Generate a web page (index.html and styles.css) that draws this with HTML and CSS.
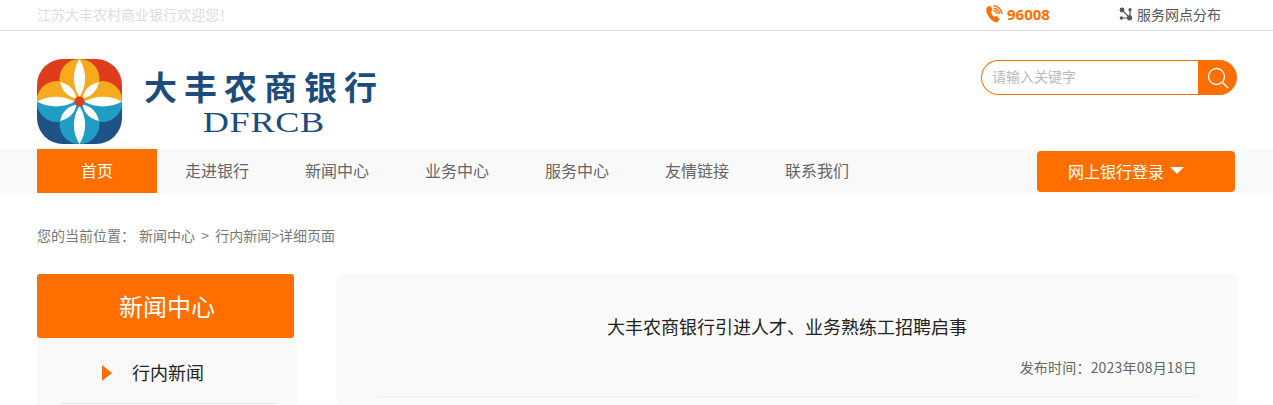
FILE: index.html
```html
<!DOCTYPE html>
<html>
<head>
    <meta charset="utf-8">
    <link rel="stylesheet" href="styles.css">
</head>
<body>
    <div class="topbar">
        <div class="wrap topbar-inner">
            <div class="welcome">江苏大丰农村商业银行欢迎您！</div>
            <div class="hotline">
                <svg class="phone-icon" width="18" height="18" viewBox="0 0 18 18">
                    <path d="M3.2 1.6 L5.6 1 L7.6 5 L5.9 6.5 C6.2 8.6 7.6 10.9 9.4 12 L11.2 10.8 L14.4 13.8 L13.4 16 C12.6 17.4 10.8 17.6 9.2 16.8 C4.8 14.4 1.6 9.4 1.2 4.8 C1.1 3.4 2 2.2 3.2 1.6 Z" fill="#ff6f00"/>
                    <path d="M8.6 5.6 A3.6 3.6 0 0 1 12 9 M8.6 3.2 A6 6 0 0 1 14.4 9 M8.6 .8 A8.4 8.4 0 0 1 16.8 9" fill="none" stroke="#ff6f00" stroke-width="1.4"/>
                </svg>
                <span class="hotline-num">96008</span>
            </div>
            <div class="outlets">
                <svg width="14" height="14" viewBox="0 0 14 14">
                    <path d="M3 3 L10 10 M3 11 L10 11 M11 3 L11 10" stroke="#555" stroke-width="1.2" fill="none"/>
                    <circle cx="3" cy="3" r="2.4" fill="#555"/>
                    <circle cx="11" cy="2.6" r="1.6" fill="#555"/>
                    <circle cx="2.4" cy="11" r="1.7" fill="#555"/>
                    <circle cx="10.6" cy="10.8" r="2.6" fill="#555"/>
                </svg>
                <span>服务网点分布</span>
            </div>
        </div>
    </div>

    <div class="wrap header">
        <div class="logo">
            <svg width="85" height="85" viewBox="0 0 85 85">
                <defs>
                    <clipPath id="logoBox"><rect width="85" height="85" rx="26"/></clipPath>
                    <clipPath id="logoTop"><rect width="85" height="42.5"/></clipPath>
                    <clipPath id="logoBottom"><rect y="42.5" width="85" height="42.5"/></clipPath>
                </defs>
                <g clip-path="url(#logoBox)">
                    <rect width="85" height="42.5" fill="#df3c1e"/>
                    <rect y="42.5" width="85" height="42.5" fill="#1f5287"/>
                    <g clip-path="url(#logoTop)" fill="#f6ab1e">
                        <circle cx="42.5" cy="20" r="20"/>
                        <circle cx="20" cy="42.5" r="20.5"/>
                        <circle cx="65" cy="42.5" r="20.5"/>
                    </g>
                    <g clip-path="url(#logoBottom)" fill="#219cc3">
                        <circle cx="42.5" cy="65" r="20"/>
                        <circle cx="20" cy="42.5" r="20.5"/>
                        <circle cx="65" cy="42.5" r="20.5"/>
                    </g>
                    <g fill="#fff">
                        <path d="M42.5 0 C50 12 50 26 42.5 38 C35 26 35 12 42.5 0 Z"/>
                        <path d="M42.5 85 C50 73 50 59 42.5 47 C35 59 35 73 42.5 85 Z"/>
                        <path d="M0 42.5 C12 36 26 36 38 42.5 C26 49 12 49 0 42.5 Z"/>
                        <path d="M85 42.5 C73 36 59 36 47 42.5 C59 49 73 49 85 42.5 Z"/>
                        <path d="M23 23 C32 25 38 31 39.5 39.5 C31 38 25 32 23 23 Z"/>
                        <path d="M62 23 C53 25 47 31 45.5 39.5 C54 38 60 32 62 23 Z"/>
                        <path d="M23 62 C32 60 38 54 39.5 45.5 C31 47 25 53 23 62 Z"/>
                        <path d="M62 62 C53 60 47 54 45.5 45.5 C54 47 60 53 62 62 Z"/>
                    </g>
                    <circle cx="42.5" cy="42.5" r="5" fill="#df3c1e"/>
                </g>
            </svg>
            <div class="logo-name">
                <div class="logo-cn">大丰农商银行</div>
                <div class="logo-en">DFRCB</div>
            </div>
        </div>
        <div class="search">
            <div class="search-input">请输入关键字</div>
            <div class="search-btn">
                <svg width="24" height="24" viewBox="0 0 24 24" fill="none" stroke="#fff">
                    <circle cx="10.5" cy="10.5" r="8" stroke-width="1.3"/>
                    <path d="M16.5 16.5 L22 22" stroke-width="1.6"/>
                </svg>
            </div>
        </div>
    </div>

    <div class="nav">
        <div class="wrap nav-inner">
            <a class="nav-item active">首页</a>
            <a class="nav-item">走进银行</a>
            <a class="nav-item">新闻中心</a>
            <a class="nav-item">业务中心</a>
            <a class="nav-item">服务中心</a>
            <a class="nav-item">友情链接</a>
            <a class="nav-item">联系我们</a>
            <div class="login-btn">网上银行登录<span class="caret"></span></div>
        </div>
    </div>

    <div class="wrap crumbs">
        <span class="crumbs-label">您的当前位置：</span>
        <span>新闻中心 &nbsp;&gt; &nbsp;行内新闻&gt;详细页面</span>
    </div>

    <div class="wrap main">
        <div class="side">
            <div class="side-title">新闻中心</div>
            <div class="side-list">
                <div class="side-item">行内新闻</div>
            </div>
        </div>
        <div class="article">
            <h1 class="article-title">大丰农商银行引进人才、业务熟练工招聘启事</h1>
            <div class="article-date">发布时间：2023年08月18日</div>
            <div class="article-rule"></div>
        </div>
    </div>
</body>
</html>
```

FILE: styles.css
```css
html, body {
    height: 405px;
    overflow: hidden;
}

body {
    margin: 0;
    background: #fff;
    font-family: "Noto Sans CJK SC", "Liberation Sans", sans-serif;
    font-size: 14px;
    color: #666;
}

.wrap {
    width: 1200px;
    margin-left: 37px;
}

.topbar {
    height: 30px;
    border-bottom: 1px solid #e5e5e5;
}

.topbar-inner {
    display: flex;
    align-items: center;
    height: 28px;
}

.welcome {
    color: #ddd;
    width: 948px;
}

.hotline {
    display: flex;
    align-items: center;
    gap: 4px;
    width: 134px;
}

.hotline-num {
    font-family: "Open Sans", sans-serif;
    font-size: 15px;
    font-weight: 700;
    color: #ff6f00;
}

.outlets {
    display: flex;
    align-items: center;
    gap: 4px;
    white-space: nowrap;
    color: #555;
}

.header {
    display: flex;
    justify-content: space-between;
    align-items: flex-start;
    height: 118px;
}

.logo {
    display: flex;
    margin-top: 28px;
}

.logo-name {
    margin-left: 22px;
    width: 240px;
    text-align: center;
    color: #1c4c7c;
}

.logo-cn {
    margin-top: 9px;
    height: 36px;
    font-size: 33px;
    line-height: 36px;
    font-weight: 700;
    letter-spacing: 7px;
    white-space: nowrap;
}

.logo-en {
    display: inline-block;
    margin-top: 3px;
    font-family: "Liberation Serif", serif;
    font-size: 29px;
    line-height: 30px;
    letter-spacing: .5px;
    transform: scaleX(1.25);
}

.search {
    display: flex;
    margin-top: 29px;
    width: 256px;
    height: 35px;
}

.search-input {
    flex: 1;
    padding-left: 10px;
    border: 1px solid #ff6f00;
    border-right: 0;
    border-radius: 18px 0 0 18px;
    line-height: 31px;
    color: #bbb;
}

.search-btn {
    display: flex;
    align-items: center;
    justify-content: center;
    width: 39px;
    background: #ff6f00;
    border-radius: 0 18px 18px 0;
}

.nav {
    height: 44px;
    background: #f9f9f9;
}

.nav-inner {
    display: flex;
    align-items: center;
    height: 44px;
}

.nav-item {
    width: 120px;
    height: 44px;
    line-height: 42px;
    text-align: center;
    font-size: 16px;
    color: #666;
}

.nav-item.active {
    background: #ff6f00;
    color: #fff;
}

.login-btn {
    display: flex;
    align-items: center;
    justify-content: center;
    gap: 6px;
    width: 178px;
    height: 39px;
    padding: 0 20px 2px 0;
    margin-left: 160px;
    margin-top: 1px;
    background: #ff6f00;
    border-radius: 4px;
    font-size: 16px;
    color: #fff;
}

.caret {
    width: 0;
    height: 0;
    border-left: 7px solid transparent;
    border-right: 7px solid transparent;
    border-top: 7px solid #fff;
    margin-bottom: 1px;
}

.crumbs {
    display: flex;
    margin-top: 32px;
    height: 20px;
    line-height: 20px;
    font-size: 14px;
    color: #777;
}

.crumbs-label {
    width: 102px;
}

.main {
    display: flex;
    height: 131px;
    margin-top: 29px;
}

.side {
    width: 260px;
    margin-right: 40px;
}

.side-title {
    width: 254px;
    height: 64px;
    padding-left: 3px;
    line-height: 64px;
    text-align: center;
    background: #ff6f00;
    border-radius: 3px;
    font-size: 24px;
    color: #fff;
}

.side-list {
    height: 67px;
    background: #f9f9f9;
    padding: 0 20px 0 25px;
}

.side-item {
    position: relative;
    height: 65px;
    line-height: 68px;
    padding-left: 70px;
    border-bottom: 1px solid #e5e5e5;
    font-size: 18px;
    color: #222;
}

.side-item::before {
    content: "";
    position: absolute;
    left: 40px;
    top: 27px;
    border-left: 10px solid #ff6f00;
    border-top: 8px solid transparent;
    border-bottom: 8px solid transparent;
}

.article {
    width: 820px;
    padding: 0 40px;
    background: #fafafa;
    border-radius: 3px;
}

.article-title {
    margin: 39px 0 0;
    height: 26px;
    line-height: 26px;
    text-align: center;
    font-size: 18px;
    font-weight: 400;
    color: #222;
}

.article-date {
    margin-top: 15px;
    height: 26px;
    line-height: 26px;
    text-align: right;
    font-size: 14px;
    letter-spacing: .2px;
    color: #666;
}

.article-rule {
    margin-top: 16px;
    border-top: 1px solid #eee;
}
```
